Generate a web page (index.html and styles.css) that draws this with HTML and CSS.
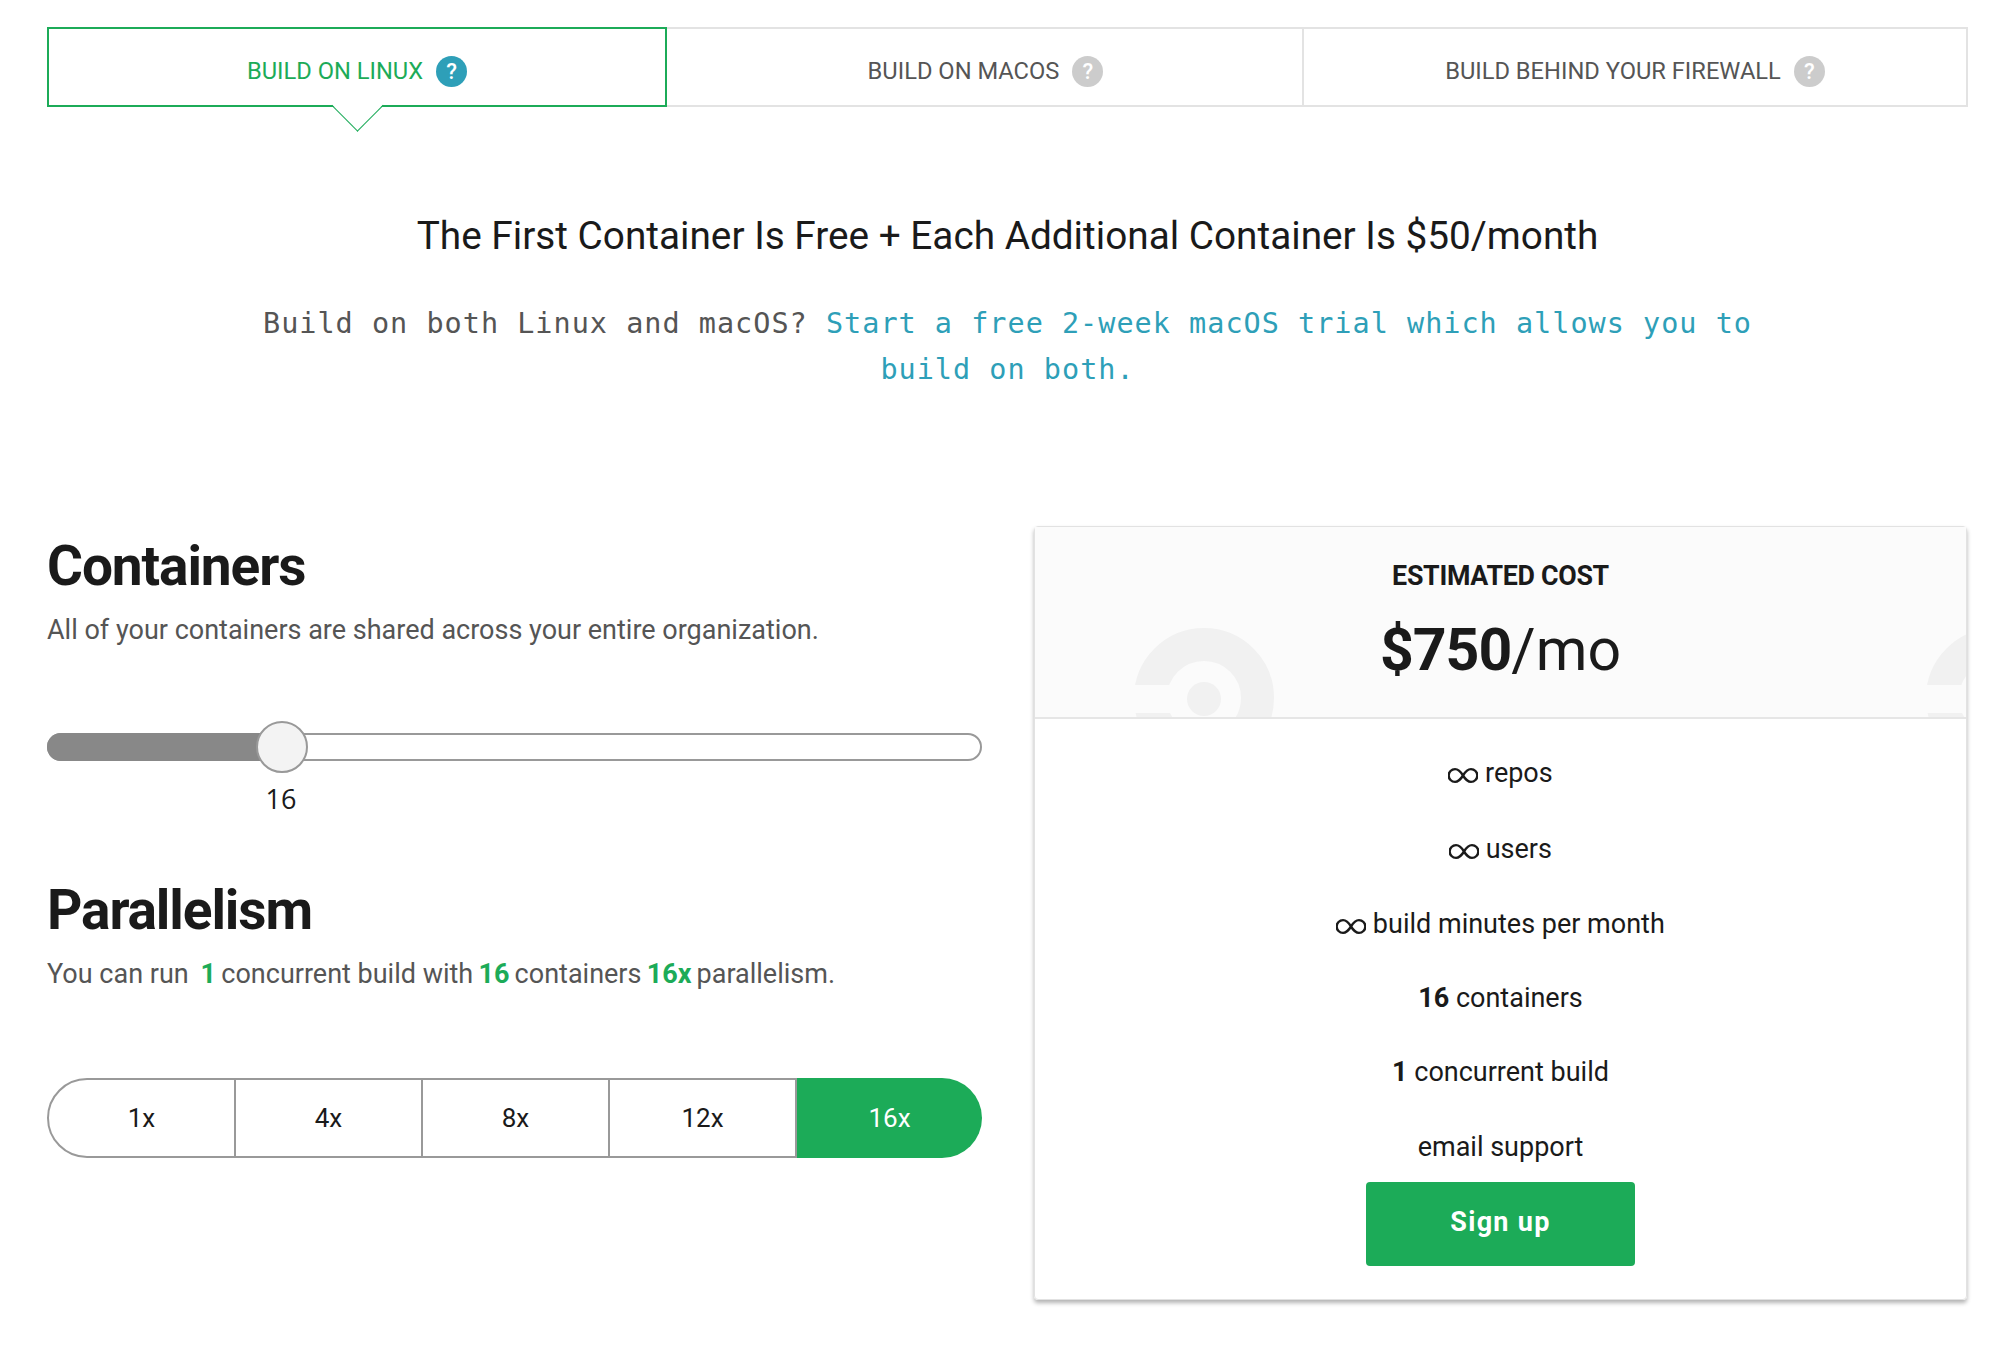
FILE: index.html
```html
<!DOCTYPE html>
<html lang="en">
<head>
    <meta charset="UTF-8">
    <meta name="viewport" content="width=device-width, initial-scale=1.0">
    <title>Pricing</title>
    <link rel="stylesheet" href="styles.css">
</head>
<body>
    <svg class="defs" width="0" height="0">
        <symbol id="inf" viewBox="0 0 32 18">
            <path d="M16 9C13 4 10.500 2.200 7.500 2.200A6.800 6.800 0 0 0 7.500 15.800C10.500 15.800 13 14 16 9C19 4 21.500 2.200 24.500 2.200A6.800 6.800 0 0 1 24.500 15.800C21.500 15.800 19 14 16 9Z" fill="none" stroke="currentColor" stroke-width="2.600"/>
        </symbol>
        <symbol id="mark" viewBox="0 0 140 140">
            <circle cx="70" cy="70" r="53.500" fill="none" stroke="#f1f1f1" stroke-width="33"/>
            <rect x="0" y="57" width="36" height="28" fill="#fbfbfb"/>
            <circle cx="70" cy="71" r="17" fill="#f1f1f1"/>
        </symbol>
    </svg>

    <div class="tabs">
        <div class="tab tab-active">BUILD ON LINUX <span class="help">?</span></div>
        <div class="tab tab-mid">BUILD ON MACOS <span class="help">?</span></div>
        <div class="tab tab-last">BUILD BEHIND YOUR FIREWALL <span class="help">?</span></div>
    </div>

    <h2 class="headline">The First Container Is Free + Each Additional Container Is $50/month</h2>
    <p class="mono">Build on both Linux and macOS? <a href="#">Start a free 2-week macOS trial which allows you to build on both.</a></p>

    <div class="columns">
        <div class="left">
            <h1>Containers</h1>
            <p class="desc">All of your containers are shared across your entire organization.</p>

            <div class="slider">
                <div class="slider-fill"></div>
                <div class="slider-thumb"></div>
            </div>
            <div class="slider-value">16</div>

            <h1 class="second">Parallelism</h1>
            <p class="desc">You can run &nbsp;<b>1</b> concurrent build with <b>16</b> containers <b>16x</b> parallelism.</p>

            <div class="segments">
                <div class="segment">1x</div>
                <div class="segment">4x</div>
                <div class="segment">8x</div>
                <div class="segment">12x</div>
                <div class="segment segment-on">16x</div>
            </div>
        </div>

        <div class="card">
            <div class="card-head">
                <svg class="mark mark-1"><use href="#mark"/></svg>
                <svg class="mark mark-2"><use href="#mark"/></svg>
                <div class="est">ESTIMATED COST</div>
                <div class="price"><b>$750</b>/mo</div>
            </div>
            <ul class="features">
                <li class="unlimited"><svg class="inf"><use href="#inf"/></svg> repos</li>
                <li class="unlimited"><svg class="inf"><use href="#inf"/></svg> users</li>
                <li class="minutes"><svg class="inf"><use href="#inf"/></svg> build minutes per month</li>
                <li><b>16</b> containers</li>
                <li><b>1</b> concurrent build</li>
                <li>email support</li>
            </ul>
            <a class="signup" href="#">Sign up</a>
        </div>
    </div>
</body>
</html>
```

FILE: styles.css
```css
* {
    box-sizing: border-box;
}

body {
    margin: 0;
    padding: 27px 44px 40px 47px;
    font-family: Roboto, sans-serif;
    color: #1a1a1a;
    background: #fff;
}

.defs {
    position: absolute;
}

/* tabs */
.tabs {
    display: flex;
    height: 80px;
}

.tab {
    display: flex;
    align-items: center;
    justify-content: center;
    gap: 13px;
    padding-top: 8px;
    font-size: 23.700px;
    color: #555;
    border: 2px solid #e3e3e3;
    border-left: 0;
}

.tab-active {
    position: relative;
    width: 620px;
    color: #1cab58;
    border: 2px solid #1cab58;
}

.tab-active::after {
    content: "";
    position: absolute;
    left: 290px;
    bottom: -19px;
    width: 36px;
    height: 36px;
    background: linear-gradient(135deg, transparent 50%, #fff 50%);
    border-right: 1.500px solid #1cab58;
    border-bottom: 1.500px solid #1cab58;
    transform: rotate(45deg);
}

.tab-mid {
    width: 637px;
    padding-left: 2px;
}

.tab-last {
    flex: 1;
}

.help {
    display: inline-block;
    width: 31px;
    height: 31px;
    border-radius: 50%;
    background: #ccc;
    color: #fff;
    font-size: 22px;
    font-weight: 500;
    line-height: 31px;
    text-align: center;
}

.tab-active .help {
    background: #2e9fb8;
}

/* intro */
.headline {
    margin: 105px 0 0;
    font-size: 38.750px;
    font-weight: 400;
    line-height: 48px;
    text-align: center;
}

.mono {
    width: 1520px;
    margin: 41px auto 0;
    font-family: "DejaVu Sans Mono", monospace;
    font-size: 28.500px;
    letter-spacing: 1px;
    line-height: 46px;
    color: #555;
    text-align: center;
}

.mono a {
    color: #2e9fb8;
    text-decoration: none;
}

.columns {
    display: flex;
    justify-content: space-between;
    margin-top: 133px;
}

/* left side */
.left {
    width: 935px;
}

h1 {
    margin: 10px 0 0;
    font-size: 55px;
    font-weight: 700;
    line-height: 60px;
    letter-spacing: -1.100px;
}

h1.second {
    margin-top: 64px;
}

.desc {
    margin: 16px 0 0;
    font-size: 27px;
    line-height: 36px;
    color: #555;
}

.desc b {
    margin: 0 -1.500px;
    font-weight: 700;
    color: #1cab58;
}

.slider {
    position: relative;
    height: 28px;
    margin-top: 85px;
    border: 2px solid #999;
    border-radius: 14px;
}

.slider-fill {
    width: 220px;
    height: 28px;
    margin: -2px 0 0 -2px;
    background: #888;
    border-radius: 14px 0 0 14px;
}

.slider-thumb {
    position: absolute;
    left: 207px;
    top: -14px;
    width: 52px;
    height: 52px;
    background: #f3f3f3;
    border: 2px solid #999;
    border-radius: 50%;
}

.slider-value {
    width: 468px;
    margin-top: 21px;
    font-family: "Open Sans", sans-serif;
    font-size: 27px;
    line-height: 34px;
    text-align: center;
}

.segments {
    display: flex;
    height: 80px;
    margin-top: 86px;
}

.segment {
    flex: 1;
    display: flex;
    align-items: center;
    justify-content: center;
    font-size: 26px;
    border: 2px solid #999;
    border-left: 0;
}

.segment:first-child {
    border-left: 2px solid #999;
    border-radius: 40px 0 0 40px;
}

.segment-on {
    color: #fff;
    background: #1cab58;
    border: 0;
    border-radius: 0 40px 40px 0;
}

/* card */
.card {
    width: 933px;
    height: 774px;
    margin-right: 1px;
    text-align: center;
    border: 1px solid #e2e2e2;
    border-radius: 4px;
    box-shadow: 0 3px 4px rgba(0, 0, 0, 0.3);
}

.card-head {
    position: relative;
    height: 192px;
    padding-top: 31px;
    overflow: hidden;
    background: #fbfbfb;
    border-bottom: 2px solid #e6e6e6;
}

.mark {
    position: absolute;
    top: 101px;
    width: 140px;
    height: 140px;
}

.mark-1 {
    left: 99px;
}

.mark-2 {
    left: 891px;
}

.est,
.price {
    position: relative;
}

.est {
    font-size: 26.800px;
    font-weight: 700;
    line-height: 36px;
    letter-spacing: -0.300px;
}

.price {
    margin-top: 21px;
    font-size: 59px;
    line-height: 70px;
}

.price b {
    font-weight: 700;
    letter-spacing: -1px;
}

.features {
    margin: 0;
    padding: 19px 0 0;
    list-style: none;
}

.features li {
    height: 74.500px;
    font-size: 27px;
    line-height: 70px;
}

.features .unlimited {
    height: 75.500px;
}

.features .minutes {
    height: 73.500px;
}

.features b {
    font-weight: 700;
}

.inf {
    width: 30px;
    height: 17px;
    vertical-align: -2px;
}

.signup {
    display: block;
    width: 269px;
    height: 84px;
    margin: -4px auto 0;
    font-size: 27px;
    font-weight: 700;
    line-height: 80px;
    letter-spacing: 1.300px;
    color: #fff;
    text-decoration: none;
    background: #1cab58;
    border-radius: 4px;
}
```
